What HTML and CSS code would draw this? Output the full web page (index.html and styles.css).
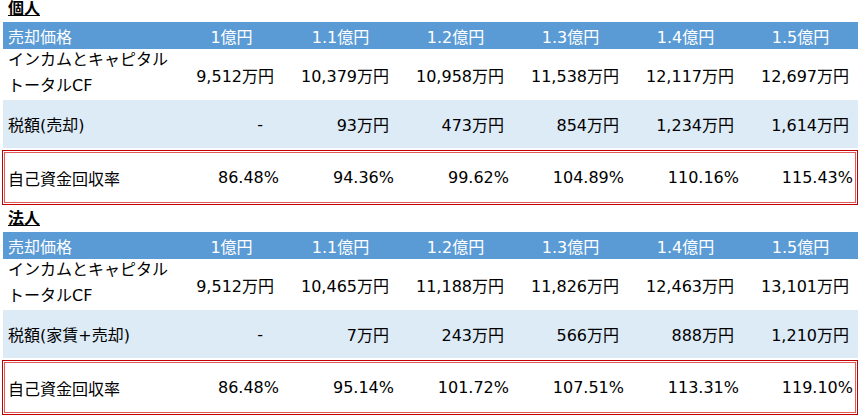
FILE: index.html
```html
<!DOCTYPE html>
<html lang="ja">
<head>
<meta charset="utf-8">
<title>売却価格別 自己資金回収率</title>
<link rel="stylesheet" href="styles.css">
</head>
<body>
<div class="sheet">
  <section class="section">
    <h2 class="title"><span>個人</span></h2>
    <div class="row head">
      <div class="cell label">売却価格</div>
      <div class="cell center">1億円</div>
      <div class="cell center">1.1億円</div>
      <div class="cell center">1.2億円</div>
      <div class="cell center">1.3億円</div>
      <div class="cell center">1.4億円</div>
      <div class="cell center">1.5億円</div>
    </div>
    <div class="row tall">
      <div class="cell label two">インカムとキャピタル<br>トータルCF</div>
      <div class="cell num">9,512万円</div>
      <div class="cell num">10,379万円</div>
      <div class="cell num">10,958万円</div>
      <div class="cell num">11,538万円</div>
      <div class="cell num">12,117万円</div>
      <div class="cell num">12,697万円</div>
    </div>
    <div class="row band">
      <div class="cell label">税額(売却)</div>
      <div class="cell num dash">-</div>
      <div class="cell num">93万円</div>
      <div class="cell num">473万円</div>
      <div class="cell num">854万円</div>
      <div class="cell num">1,234万円</div>
      <div class="cell num">1,614万円</div>
    </div>
    <div class="row boxed">
      <div class="cell label">自己資金回収率</div>
      <div class="cell pct">86.48%</div>
      <div class="cell pct">94.36%</div>
      <div class="cell pct">99.62%</div>
      <div class="cell pct">104.89%</div>
      <div class="cell pct">110.16%</div>
      <div class="cell pct">115.43%</div>
    </div>
  </section>
  <section class="section">
    <h2 class="title"><span>法人</span></h2>
    <div class="row head">
      <div class="cell label">売却価格</div>
      <div class="cell center">1億円</div>
      <div class="cell center">1.1億円</div>
      <div class="cell center">1.2億円</div>
      <div class="cell center">1.3億円</div>
      <div class="cell center">1.4億円</div>
      <div class="cell center">1.5億円</div>
    </div>
    <div class="row tall">
      <div class="cell label two">インカムとキャピタル<br>トータルCF</div>
      <div class="cell num">9,512万円</div>
      <div class="cell num">10,465万円</div>
      <div class="cell num">11,188万円</div>
      <div class="cell num">11,826万円</div>
      <div class="cell num">12,463万円</div>
      <div class="cell num">13,101万円</div>
    </div>
    <div class="row band">
      <div class="cell label">税額(家賃+売却)</div>
      <div class="cell num dash">-</div>
      <div class="cell num">7万円</div>
      <div class="cell num">243万円</div>
      <div class="cell num">566万円</div>
      <div class="cell num">888万円</div>
      <div class="cell num">1,210万円</div>
    </div>
    <div class="row boxed">
      <div class="cell label">自己資金回収率</div>
      <div class="cell pct">86.48%</div>
      <div class="cell pct">95.14%</div>
      <div class="cell pct">101.72%</div>
      <div class="cell pct">107.51%</div>
      <div class="cell pct">113.31%</div>
      <div class="cell pct">119.10%</div>
    </div>
  </section>
</div>
</body>
</html>
```
FILE: styles.css
```css
html, body {
  margin: 0;
  padding: 0;
  background: #ffffff;
}
body {
  font-family: "DejaVu Sans", "Noto Sans CJK JP", sans-serif;
  font-size: 16px;
  color: #000000;
  overflow: hidden;
}
.sheet {
  margin-top: -5px;
  padding-left: 3px;
  width: 855px;
}
.title {
  margin: 0;
  height: 27px;
  line-height: 27px;
  font-size: 16px;
  font-weight: bold;
  padding-left: 5px;
}
.title span {
  text-decoration: underline;
  text-underline-offset: 1px;
}
.row {
  display: grid;
  grid-template-columns: 177px 103px 115px 115px 115px 115px 115px;
  align-items: center;
}
.cell {
  white-space: nowrap;
}
.label {
  padding-left: 5px;
}
.head {
  height: 27px;
  background: #5b9bd5;
  color: #ffffff;
}
.center {
  text-align: center;
}
.tall {
  height: 51px;
}
.two {
  line-height: 26px;
  margin-top: -3px;
}
.band {
  height: 48px;
  background: #ddebf7;
}
.num {
  text-align: right;
  padding-right: 9px;
}
.dash {
  padding-right: 20px;
}
.boxed {
  box-sizing: border-box;
  height: 55px;
  margin-top: 2px;
  margin-left: -1px;
  width: 856px;
  border: 1px solid #c00000;
  box-shadow: inset 0 0 0 1px #ffffff, inset 0 0 0 2px #e05a5a;
  grid-template-columns: 177px 103px 115px 115px 115px 115px 114px;
}
.pct {
  text-align: right;
  padding-right: 4px;
}
```
